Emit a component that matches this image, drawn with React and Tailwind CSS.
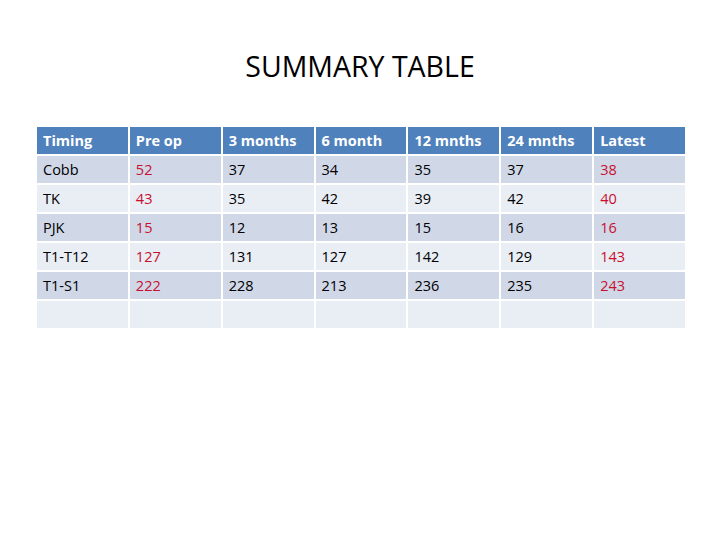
import React from "react";

const header = ["Timing", "Pre op", "3 months", "6 month", "12 mnths", "24 mnths", "Latest"];
const rows = [
  ["Cobb", "52", "37", "34", "35", "37", "38"],
  ["TK", "43", "35", "42", "39", "42", "40"],
  ["PJK", "15", "12", "13", "15", "16", "16"],
  ["T1-T12", "127", "131", "127", "142", "129", "143"],
  ["T1-S1", "222", "228", "213", "236", "235", "243"],
  ["", "", "", "", "", "", ""],
];

export default function App() {
  return (
    <div className="w-[720px] h-[540px] bg-white" style={{ fontFamily: '"Open Sans", "Liberation Sans", sans-serif' }}>
      <div className="pt-[48px] h-[127px]">
        <h1 className="text-center text-[28.5px] leading-[36px] text-black">SUMMARY TABLE</h1>
      </div>
      <div className="ml-[37px] w-[648px] grid grid-cols-7 gap-[2px]">
        {header.map((h) => (
          <div key={h} className="h-[27px] bg-[#4f81bd] text-white font-bold text-[14.5px] leading-[27px] pl-[6px]">
            {h}
          </div>
        ))}
        {rows.map((r, i) =>
          r.map((c, j) => (
            <div
              key={i + "-" + j}
              className={`h-[27px] text-[14.5px] leading-[28px] pl-[6px] ${i % 2 === 0 ? "bg-[#d0d8e8]" : "bg-[#e9edf4]"} ${
                (j === 1 || j === 6) ? "text-[#c8102e]" : "text-black"
              }`}
            >
              {c}
            </div>
          ))
        )}
      </div>
    </div>
  );
}
